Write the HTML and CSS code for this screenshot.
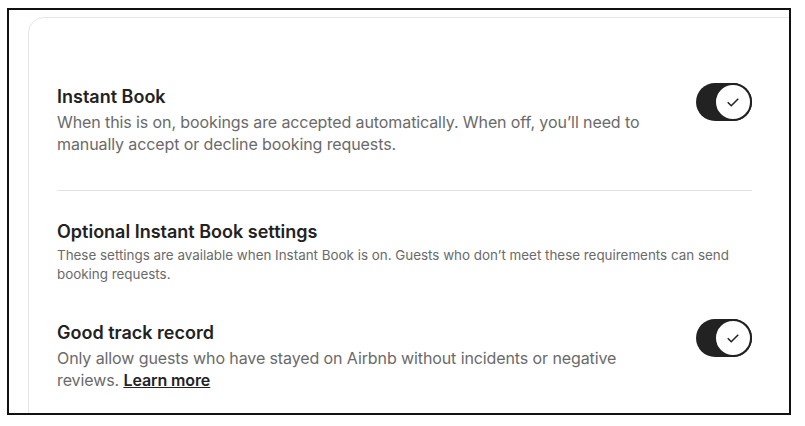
FILE: index.html
```html
<!DOCTYPE html>
<html lang="en">
<head>
<meta charset="utf-8">
<title>Instant Book</title>
<link rel="stylesheet" href="styles.css">
</head>
<body>
<div class="frame">
  <div class="card">
    <div class="row">
      <div class="text">
        <h2 class="title">Instant Book</h2>
        <p class="desc">When this is on, bookings are accepted automatically. When off, you’ll need to manually accept or decline booking requests.</p>
      </div>
      <button class="toggle" aria-pressed="true">
        <span class="knob">
          <svg viewBox="0 0 32 32" width="14" height="14" aria-hidden="true"><path d="M4 16.5l8 8 16-16" fill="none" stroke="#222" stroke-width="3.5"/></svg>
        </span>
      </button>
    </div>
    <hr class="divider">
    <div class="group">
      <h2 class="title">Optional Instant Book settings</h2>
      <p class="desc small">These settings are available when Instant Book is on. Guests who don’t meet these requirements can send booking requests.</p>
    </div>
    <div class="row second">
      <div class="text">
        <h2 class="title">Good track record</h2>
        <p class="desc">Only allow guests who have stayed on Airbnb without incidents or negative reviews. <a class="link" href="#">Learn more</a></p>
      </div>
      <button class="toggle" aria-pressed="true">
        <span class="knob">
          <svg viewBox="0 0 32 32" width="14" height="14" aria-hidden="true"><path d="M4 16.5l8 8 16-16" fill="none" stroke="#222" stroke-width="3.5"/></svg>
        </span>
      </button>
    </div>
  </div>
</div>
</body>
</html>
```
FILE: styles.css
```css
* { box-sizing: border-box; }
html, body { margin: 0; padding: 0; background: #fff; }
body {
  font-family: "Inter", "Noto Sans", sans-serif;
  color: #222;
}
.frame {
  margin: 8px 0 0 7px;
  width: 784px;
  height: 407px;
  border: 2px solid #111;
  overflow: hidden;
  padding: 7px 0 0 19px;
}
.card {
  margin-right: -40px;
  border: 1px solid #e6e6e6;
  border-radius: 16px;
  padding: 67px 76px 60px 28px;
  min-height: 480px;
}
.row {
  display: flex;
  align-items: flex-start;
  justify-content: space-between;
  gap: 40px;
}
.text { flex: 1; max-width: 600px; }
.title {
  margin: 0;
  font-size: 18px;
  line-height: 24px;
  font-weight: 600;
  color: #222;
}
.desc {
  margin: 2px 0 0;
  font-size: 16px;
  line-height: 22px;
  color: #6a6a6a;
  letter-spacing: -0.1px;
}
.desc.small {
  font-size: 13.4px;
  line-height: 19px;
  margin-top: 2px;
  letter-spacing: 0;
}
.link {
  color: #222;
  font-weight: 600;
  text-decoration: underline;
}
.divider {
  border: 0;
  border-top: 1px solid #e2e2e2;
  margin: 35px 0 29px;
}
.group { margin-bottom: 37px; }
.toggle {
  flex: none;
  width: 56px;
  height: 38px;
  margin-top: -2px;
  padding: 0;
  border: 0;
  border-radius: 19px;
  background: #222;
  position: relative;
  cursor: pointer;
}
.knob {
  position: absolute;
  right: 0;
  top: 0;
  width: 38px;
  height: 38px;
  border-radius: 50%;
  background: #fff;
  border: 2px solid #222;
  display: flex;
  align-items: center;
  justify-content: center;
}
```
